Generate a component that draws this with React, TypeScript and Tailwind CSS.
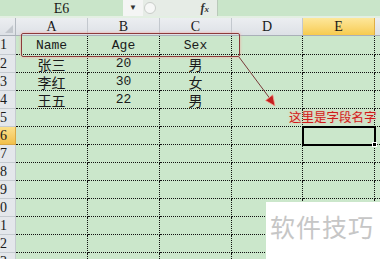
import React from 'react';

const cols = [
  { key: 'A', w: 'w-[72px]' },
  { key: 'B', w: 'w-[72px]' },
  { key: 'C', w: 'w-[72px]' },
  { key: 'D', w: 'w-[71px]' },
  { key: 'E', w: 'w-[72px]' },
];

const data: Record<number, string[]> = {
  1: ['Name', 'Age', 'Sex'],
  2: ['张三', '20', '男'],
  3: ['李红', '30', '女'],
  4: ['王五', '22', '男'],
};

const rows = Array.from({ length: 13 }, (_, i) => i + 1);

export default function App() {
  return (
    <div className="relative w-[380px] h-[259px] overflow-hidden bg-[#cbe7cb] font-['Liberation_Serif','Noto_Sans_CJK_SC',serif] text-[#1a1a1a]">
      {/* Formula bar */}
      <div className="flex h-[16px] bg-[#c9e5c9]">
        <div className="w-[123px] flex items-center justify-center text-[14px] leading-none pt-[1px]">E6</div>
        <div className="w-[20px] bg-[#f4f5f4] flex items-center justify-center text-[8px] text-[#333]">▼</div>
        <div className="w-[74px] bg-[#e6ece6] flex items-center relative">
          <div className="w-[12px] h-[12px] rounded-full border border-[#c9cdc9] bg-[#f6f7f6] ml-[1px]" />
          <span className="ml-auto mr-[8px] italic text-[12px] font-bold text-[#333] leading-none">f<span className="text-[9px]">x</span></span>
        </div>
        <div className="flex-1 bg-[#c9e5c9] border-l border-[#b9c9b9]" />
      </div>
      <div className="h-[2px] bg-[#e3efe2]" />

      {/* Column headers */}
      <div className="flex h-[18px] border-b border-[#a9b0b8]">
        <div className="w-[16px] bg-gradient-to-b from-[#eceef1] to-[#dde1e6] border-r border-[#b3b9c0] relative">
          <div className="absolute right-[2px] bottom-[2px] w-0 h-0 border-l-[8px] border-l-transparent border-b-[8px] border-b-[#c3c8ce]" />
        </div>
        {cols.map((c) => (
          <div
            key={c.key}
            className={`${c.w} flex items-end justify-center pb-[1px] text-[14px] leading-none border-r ${
              c.key === 'E'
                ? 'bg-gradient-to-b from-[#fde79a] to-[#f7cb4d] border-[#dfae46]'
                : 'bg-gradient-to-b from-[#eceef1] to-[#dde1e6] border-[#c3c8ce]'
            }`}
          >
            {c.key}
          </div>
        ))}
        <div className="flex-1 bg-gradient-to-b from-[#eceef1] to-[#dde1e6]" />
      </div>

      {/* Rows */}
      {rows.map((r) => (
        <div key={r} className={`flex ${r === 1 ? 'h-[19px]' : 'h-[18px]'}`}>
          <div
            className={`w-[16px] overflow-hidden flex items-center justify-end pr-[8px] text-[14px] leading-none border-r border-b ${
              r === 6
                ? 'bg-gradient-to-b from-[#fbe08a] to-[#f2c04a] border-[#d9a845]'
                : 'bg-[#e4e7eb] border-[#c5cad0]'
            }`}
          >
            <span className="whitespace-nowrap">{r}</span>
          </div>
          {cols.map((c, ci) => {
            const v = data[r]?.[ci];
            const latin = v && /^[A-Za-z0-9]+$/.test(v);
            return (
              <div
                key={c.key}
                className={`${c.w} flex items-center justify-center border-r border-b border-dotted border-[#111] leading-none ${
                  latin ? "font-['Liberation_Mono',monospace] text-[13px]" : "font-['Noto_Sans_CJK_SC',sans-serif] text-[14px]"
                }`}
              >
                {v}
              </div>
            );
          })}
          <div className="flex-1 border-b border-dotted border-[#111]" />
        </div>
      ))}

      {/* Red highlight box around field names */}
      <div className="absolute left-[21px] top-[33px] w-[219px] h-[24px] border border-[#8e3b3b] rounded-[2px] shadow-[0_0_3px_#f3a8a0]" />

      {/* Arrow */}
      <svg className="absolute left-0 top-0" width="380" height="259">
        <line x1="239" y1="57" x2="271" y2="100" stroke="#7a3a3a" strokeWidth="1" />
        <polygon points="275,106 265.5,100.5 272.8,94.8" fill="#c42020" stroke="#f2a090" strokeWidth="0.8" />
      </svg>

      {/* Annotation */}
      <div className="absolute left-[289px] top-[111px] text-[12.5px] leading-none text-[#d01a1a] font-['Noto_Sans_CJK_SC',sans-serif] [text-shadow:0_0_3px_#f6b5a5]">
        这里是字段名字
      </div>

      {/* Active cell E6 */}
      <div className="absolute left-[302px] top-[126px] w-[74px] h-[20px] border-2 border-black">
        <div className="absolute -right-[3px] -bottom-[3px] w-[5px] h-[5px] bg-black border border-white" />
      </div>

      {/* Watermark */}
      <div className="absolute left-[266px] top-[202px] w-[114px] h-[57px] bg-white flex items-start pl-[4px] pt-[12px]">
        <span className="text-[25px] leading-none tracking-[1px] text-[#c6c6c6] font-['Noto_Sans_CJK_SC',sans-serif]">软件技巧</span>
      </div>
    </div>
  );
}
